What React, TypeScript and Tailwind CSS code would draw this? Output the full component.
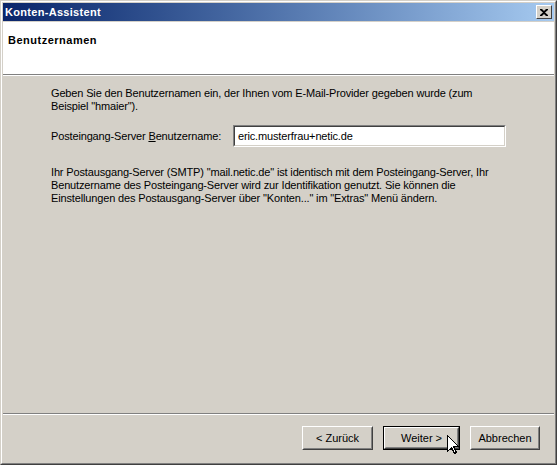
import React from "react";

const font = { fontFamily: '"Liberation Sans", Arial, sans-serif' };

function Button({ label, wide, isDefault }: { label: React.ReactNode; wide?: boolean; isDefault?: boolean }) {
  const inner = (
    <div className="border border-t-white border-l-white border-r-[#404040] border-b-[#404040] h-full">
      <div className="border border-t-[#d4d0c8] border-l-[#d4d0c8] border-r-[#808080] border-b-[#808080] h-full flex items-center justify-center text-[11px] text-black">
        {label}
      </div>
    </div>
  );
  if (isDefault) {
    return <div className={`border border-black h-[24px] ${wide ? "w-[77px]" : "w-[75px]"}`}>{inner}</div>;
  }
  return <div className={`h-[24px] ${wide ? "w-[71px]" : "w-[70px]"}`}>{inner}</div>;
}

export default function App() {
  return (
    <div className="relative w-[557px] h-[465px] bg-[#d4d0c8] select-none" style={font}>
      {/* window frame bevel */}
      <div className="w-full h-full border border-t-[#d4d0c8] border-l-[#d4d0c8] border-r-[#404040] border-b-[#404040]">
        <div className="w-full h-full border border-t-white border-l-white border-r-[#808080] border-b-[#808080] p-px flex flex-col">
          {/* title bar */}
          <div className="h-[18px] shrink-0 flex items-center justify-between bg-gradient-to-r from-[#0a246a] to-[#a6caf0]">
            <span className="pl-[2px] text-white font-bold text-[11px] leading-none tracking-[0.3px]">Konten-Assistent</span>
            <div className="mr-[2px] w-[16px] h-[14px] bg-[#d4d0c8] border border-t-white border-l-white border-r-[#404040] border-b-[#404040] flex items-center justify-center">
              <svg width="8" height="7" viewBox="0 0 8 7">
                <path d="M0 0h2l2 2 2-2h2v1L5 3.5 8 6v1H6L4 5 2 7H0V6l3-2.5L0 1z" fill="#000" />
              </svg>
            </div>
          </div>
          <div className="h-px shrink-0" />
          {/* page header */}
          <div className="h-[52px] shrink-0 bg-white flex items-center pl-[5px] pb-[16px]">
            <span className="font-bold text-[11px] text-black tracking-[0.5px]">Benutzernamen</span>
          </div>
          <div className="h-px shrink-0 bg-[#808080]" />
          <div className="h-px shrink-0 bg-white" />
          {/* page body */}
          <div className="flex-1 pt-[11px] pl-[48px] text-[11px] leading-[13px] text-black whitespace-nowrap tracking-[-0.15px]">
            <p>
              Geben Sie den Benutzernamen ein, der Ihnen vom E-Mail-Provider gegeben wurde (zum
              <br />
              Beispiel "hmaier").
            </p>
            <div className="mt-[12px] flex items-center">
              <span className="w-[182px]">
                Posteingang-Server <span className="underline">B</span>enutzername:
              </span>
              <div className="w-[273px] h-[22px] border border-t-[#808080] border-l-[#808080] border-r-white border-b-white">
                <div className="h-full border border-t-[#404040] border-l-[#404040] border-r-[#d4d0c8] border-b-[#d4d0c8] bg-white flex items-center pl-[3px]">
                  eric.musterfrau+netic.de
                </div>
              </div>
            </div>
            <p className="mt-[19px]">
              Ihr Postausgang-Server (SMTP) "mail.netic.de" ist identisch mit dem Posteingang-Server, Ihr
              <br />
              Benutzername des Posteingang-Server wird zur Identifikation genutzt. Sie können die
              <br />
              Einstellungen des Postausgang-Server über "Konten..." im "Extras" Menü ändern.
            </p>
          </div>
          <div className="h-px shrink-0 bg-[#808080]" />
          <div className="h-px shrink-0 bg-white" />
          {/* buttons */}
          <div className="h-[47px] shrink-0 flex justify-end items-start pt-[11px] pr-[14px] gap-[10px]">
            <Button label="< Zurück" wide />
            <Button label="Weiter >" isDefault wide />
            <Button label="Abbrechen" />
          </div>
        </div>
      </div>
      {/* mouse pointer */}
      <svg className="absolute left-[447px] top-[435px]" width="12" height="20" viewBox="0 0 12 20">
        <path d="M0.5 0.5V16.5L4.5 12.5L7.5 18.5L9.5 17.5L6.5 11.5H11.5Z" fill="white" stroke="black" strokeWidth="1" shapeRendering="crispEdges" />
      </svg>
    </div>
  );
}
